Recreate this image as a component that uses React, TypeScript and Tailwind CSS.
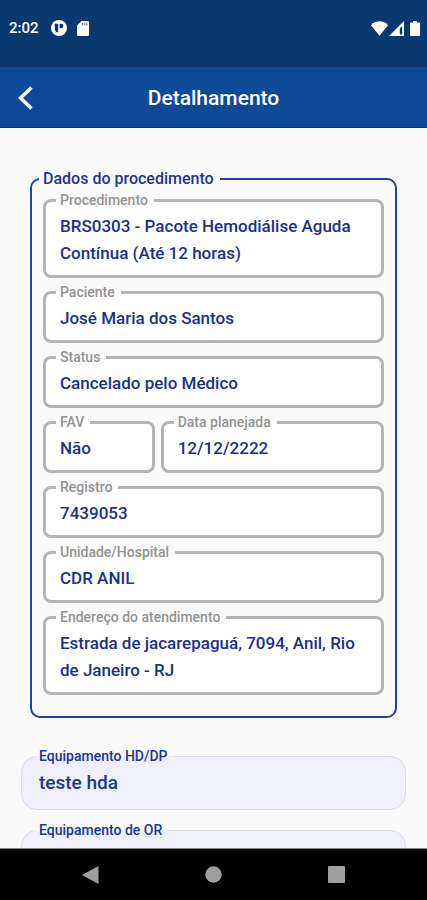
import { useId } from "react";

type FieldProps = {
  label: string;
  value: string;
  /** Number of text lines shown; more than one renders a textarea. */
  rows?: number;
};

function OutlinedField({ label, value, rows = 1 }: FieldProps) {
  const id = useId();
  const textClass =
    "block w-full min-w-0 resize-none overflow-hidden bg-transparent pl-1 text-[17px] leading-[27px] font-medium text-[#1b2f8f] outline-none";

  return (
    <fieldset className="min-w-0 rounded-lg border-[3px] border-[#b4b4b4] bg-white px-[10px] pt-[5px] pb-2">
      <legend className="h-[15px] pr-[6px] pl-1 text-sm leading-[15px] font-medium text-[#929292]">
        <label htmlFor={id} className="block whitespace-nowrap">{label}</label>
      </legend>
      {rows > 1 ? (
        <textarea id={id} rows={rows} readOnly value={value} className={textClass} />
      ) : (
        <input id={id} type="text" readOnly value={value} className={textClass} />
      )}
    </fieldset>
  );
}

function EquipmentField({ label, value }: FieldProps) {
  const id = useId();
  return (
    <fieldset className="min-w-0 rounded-2xl border border-[#dcdce6] bg-[#f0f0fd] px-[13px] pt-[5px] pb-[13px]">
      <legend className="h-[15px] pr-[5px] pl-1 text-sm leading-[15px] font-medium text-[#1b3690]">
        <label htmlFor={id} className="block whitespace-nowrap">{label}</label>
      </legend>
      <input
        id={id}
        type="text"
        defaultValue={value}
        className="block w-full min-w-0 bg-transparent pl-1 text-[19px] leading-[27px] font-medium text-[#1b3690] outline-none"
      />
    </fieldset>
  );
}

function StatusBar() {
  return (
    <div className="flex h-[67px] shrink-0 items-start bg-[#0a386f] pt-4 pr-[7px] pl-[9px] text-white">
      <div className="flex h-6 flex-1 items-center">
        <span className="text-[15px] font-medium">2:02</span>
        <svg className="ml-3 h-4 w-4" viewBox="0 0 16 16" aria-hidden>
          <circle cx="8" cy="8" r="8" fill="#fff" />
          <path d="M3.8 3.8h3.4v8.4H5.4A5 5 0 0 1 3.8 9z" fill="#0a386f" />
          <path d="M8.6 3.8h1.6a2.2 2.2 0 0 1 0 4.4H8.6z" fill="#0a386f" />
        </svg>
        <svg className="ml-[10px] h-[15px] w-3" viewBox="0 0 12 15" aria-hidden>
          <path d="M4.5 0H11a1 1 0 0 1 1 1v13a1 1 0 0 1-1 1H1a1 1 0 0 1-1-1V4.5z" fill="#fff" />
          <path d="M5 2h1.2v2.6H5zM7.2 2h1.2v2.6H7.2zM9.3 2h1.2v2.6H9.3z" fill="#5c78a0" />
        </svg>
      </div>
      <div className="flex h-6 items-center">
        <svg className="h-[15px] w-[17px]" viewBox="0 0 17 15" aria-hidden>
          <path d="M0 4.2C2.2 1.4 5.2 .3 8.5 .3S14.8 1.4 17 4.2L8.5 14.700z" fill="#fff" />
        </svg>
        <svg className="ml-px h-[15px] w-[15px]" viewBox="0 0 15 15" aria-hidden>
          <path d="M15 0v15H0zM13.2 5L10.8 7.400v6.100h2.400z" fill="#fff" fillRule="evenodd" />
        </svg>
        <svg className="ml-[6px] h-[15px] w-[10px]" viewBox="0 0 10 15" aria-hidden>
          <path d="M3 0h4v1.5h2a1 1 0 0 1 1 1V14a1 1 0 0 1-1 1H1a1 1 0 0 1-1-1V2.5a1 1 0 0 1 1-1h2z" fill="#fff" />
        </svg>
      </div>
    </div>
  );
}

function AppBar() {
  return (
    <header className="grid h-[61px] shrink-0 grid-cols-[48px_1fr_48px] items-center border-b border-[#08307f] bg-[#0c4a98] pt-[2px] text-white">
      <button type="button" aria-label="Voltar" className="flex h-12 w-12 items-center pl-[18px]">
        <svg className="h-6 w-[15px]" viewBox="0 0 15 24" fill="none" stroke="currentColor" strokeWidth="3.4" aria-hidden>
          <path d="M13.5 1.500L2.500 12l11 10.500" />
        </svg>
      </button>
      <h1 className="text-center text-[21px] leading-7 font-medium">Detalhamento</h1>
    </header>
  );
}

function NavigationBar() {
  return (
    <nav className="flex h-[52px] shrink-0 items-center justify-center gap-[106px] border-t border-[#8a8a8a] bg-black text-[#9e9e9e]">
      <button type="button" aria-label="Anterior">
        <svg className="h-[18px] w-[17px]" viewBox="0 0 17 18" fill="currentColor" aria-hidden>
          <path d="M16.5 0v18L0 9z" />
        </svg>
      </button>
      <button type="button" aria-label="Início">
        <svg className="h-[17px] w-[17px]" viewBox="0 0 17 17" fill="currentColor" aria-hidden>
          <circle cx="8.5" cy="8.5" r="8.2" />
        </svg>
      </button>
      <button type="button" aria-label="Recentes">
        <svg className="h-[17px] w-[17px]" viewBox="0 0 17 17" fill="currentColor" aria-hidden>
          <rect width="17" height="17" rx="1" />
        </svg>
      </button>
    </nav>
  );
}

export default function App() {
  return (
    <div className="flex h-screen flex-col bg-[#fafafb] font-['Roboto',sans-serif]">
      <StatusBar />
      <AppBar />

      <main className="min-h-0 flex-1 overflow-y-auto pt-[42px] [scrollbar-width:none]">
        <div className="px-[30px]">
          <fieldset className="min-w-0 rounded-[10px] border-2 border-[#2340a0] px-[11px] pt-[5px] pb-[21px]">
            <legend className="-ml-1 h-[18px] pr-[6px] pl-1 text-base leading-[18px] font-medium text-[#1b3690]">
              Dados do procedimento
            </legend>
            <div className="flex flex-col gap-[7px]">
              <OutlinedField
                label="Procedimento"
                value="BRS0303 - Pacote Hemodiálise Aguda Contínua (Até 12 horas)"
                rows={2}
              />
              <OutlinedField label="Paciente" value="José Maria dos Santos" />
              <OutlinedField label="Status" value="Cancelado pelo Médico" />
              <div className="grid grid-cols-[1fr_2fr] gap-[6px]">
                <OutlinedField label="FAV" value="Não" />
                <OutlinedField label="Data planejada" value="12/12/2222" />
              </div>
              <OutlinedField label="Registro" value="7439053" />
              <OutlinedField label="Unidade/Hospital" value="CDR ANIL" />
              <OutlinedField
                label="Endereço do atendimento"
                value="Estrada de jacarepaguá, 7094, Anil, Rio de Janeiro - RJ"
                rows={2}
              />
            </div>
          </fieldset>
        </div>

        <div className="mt-[31px] flex flex-col gap-[13px] px-[21px]">
          <EquipmentField label="Equipamento HD/DP" value="teste hda" />
          <EquipmentField label="Equipamento de OR" value="" />
        </div>
      </main>

      <NavigationBar />
    </div>
  );
}
